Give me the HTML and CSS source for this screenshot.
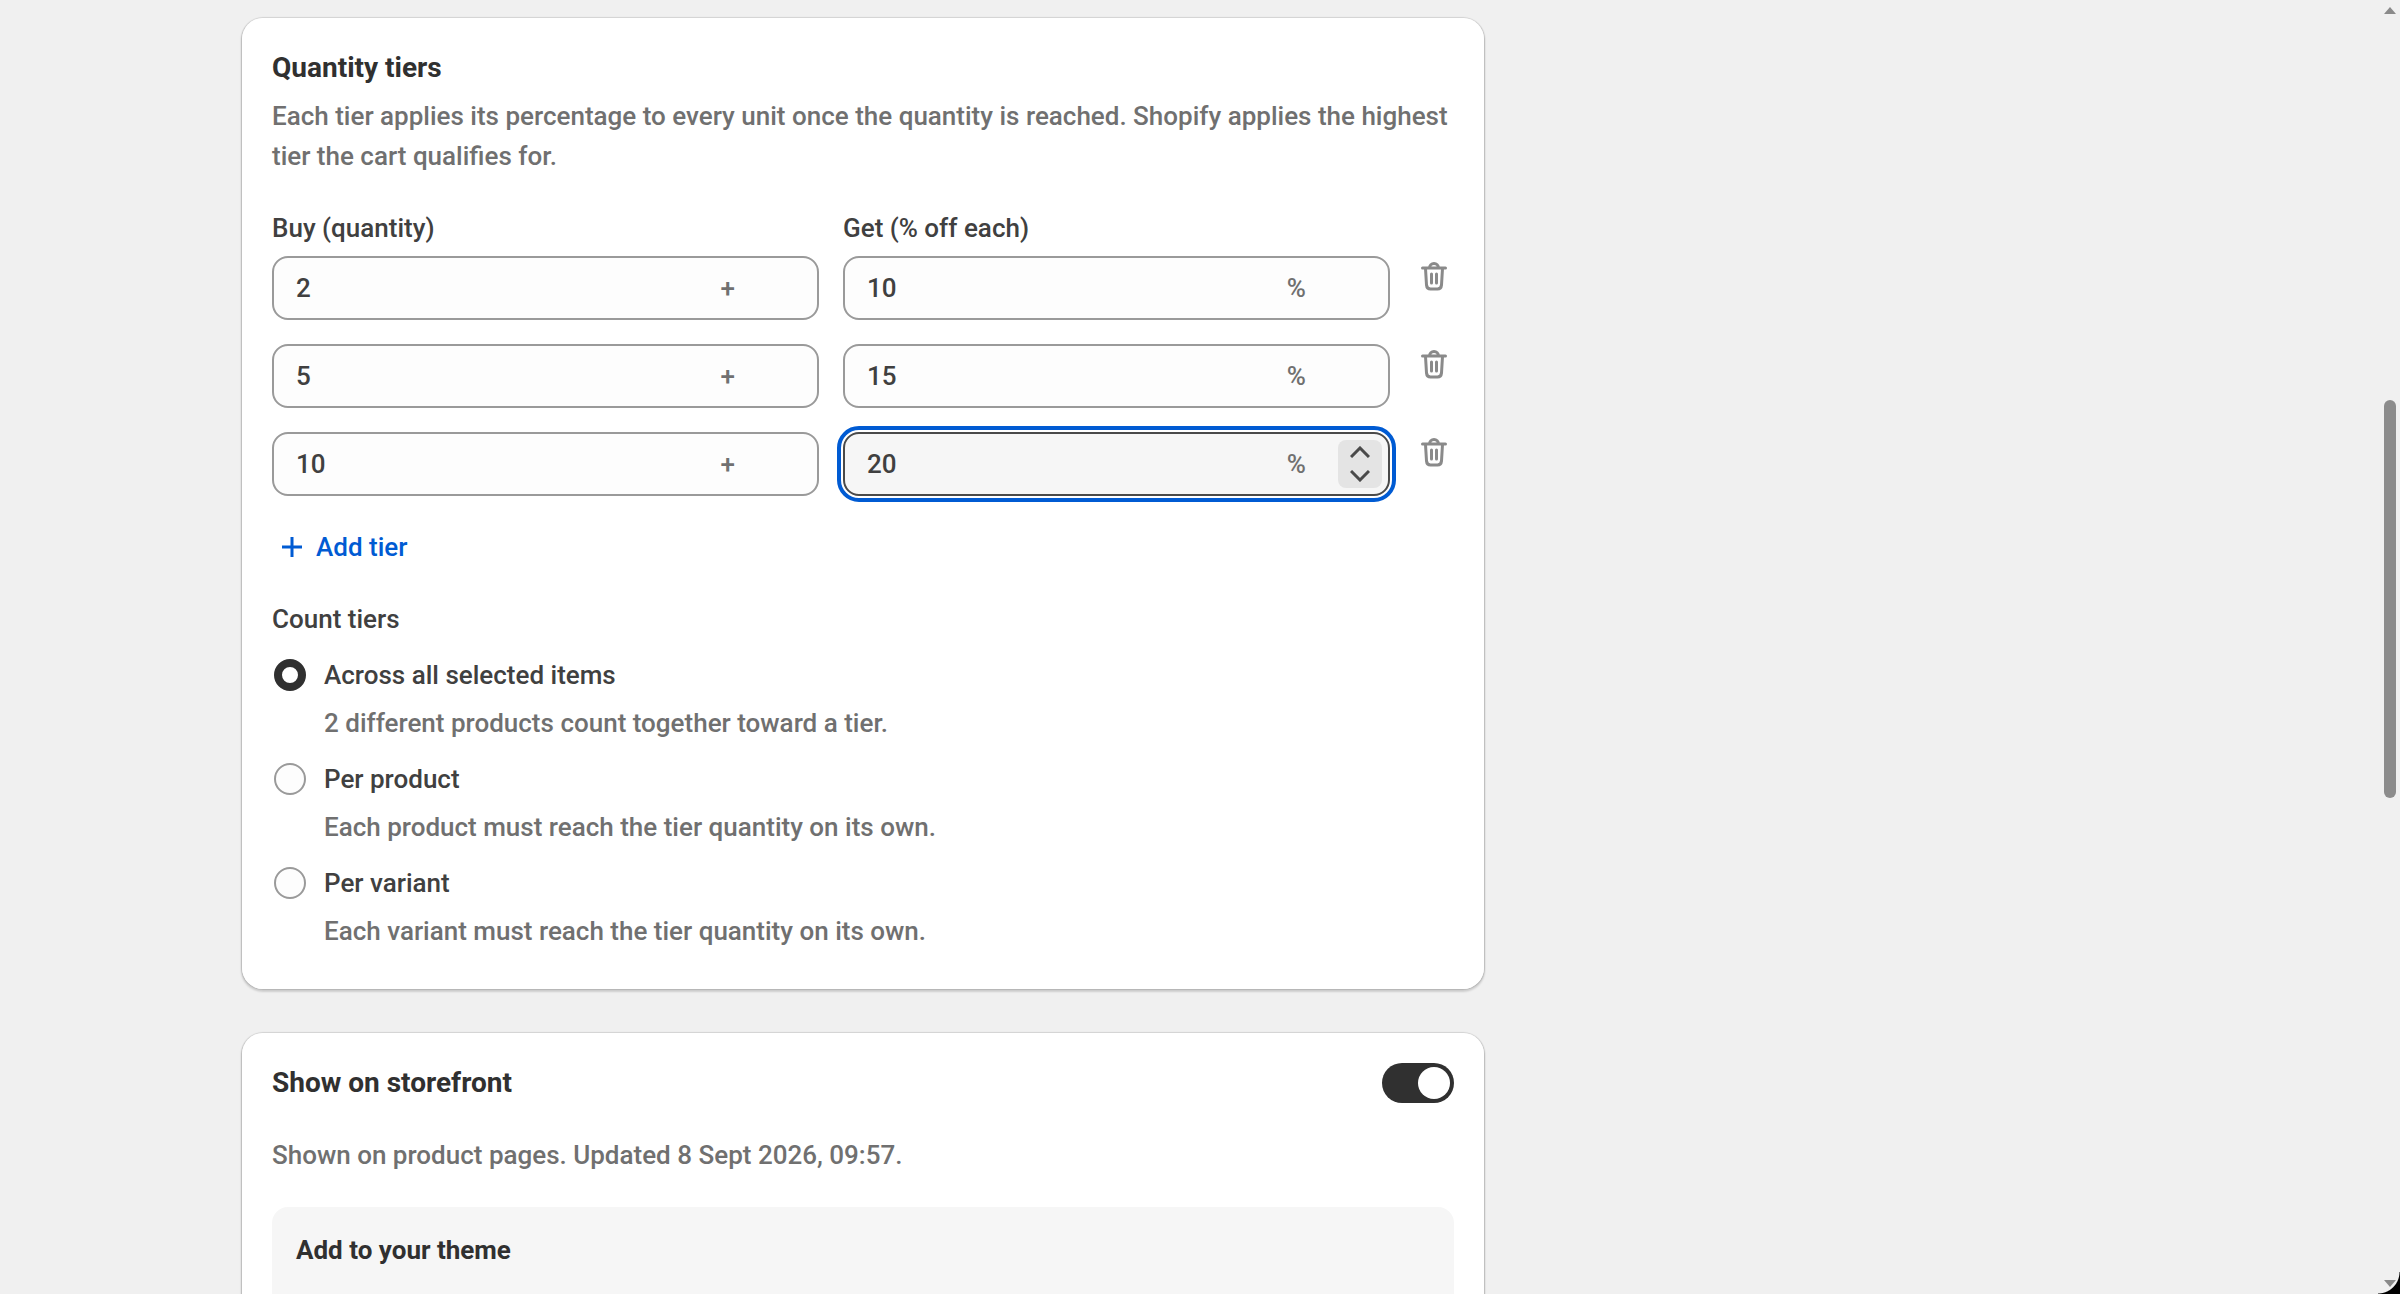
FILE: index.html
```html
<!DOCTYPE html>
<html lang="en">
<head>
<meta charset="utf-8">
<meta name="viewport" content="width=device-width, initial-scale=1">
<title>Quantity tiers</title>
<link rel="stylesheet" href="styles.css">
</head>
<body>
<svg class="sprite" aria-hidden="true">
  <symbol id="trash" viewBox="0 0 26 32">
    <path d="M1.500 8h23M8.500 8a4.500 4.500 0 0 1 9 0M4.500 8.500l1 16.500q.4 4 4 4h7q3.600 0 4-4l1-16.500M10.500 14v9M15.500 14v9" fill="none" stroke="currentColor" stroke-width="3" stroke-linecap="round" stroke-linejoin="round"/>
  </symbol>
</svg>
<div class="page">
  <main class="layout">
    <div class="main-column">
      <section class="card tiers">
        <h2>Quantity tiers</h2>
        <p class="muted">Each tier applies its percentage to every unit once the quantity is reached. Shopify applies the highest tier the cart qualifies for.</p>
        <div class="tier-grid">
          <label for="buy1">Buy (quantity)</label>
          <label for="get1">Get (% off each)</label>
          <span></span>

          <div class="field"><input id="buy1" type="text" inputmode="numeric" value="2"><span class="suffix">+</span></div>
          <div class="field"><input id="get1" type="text" inputmode="numeric" value="10"><span class="suffix">%</span></div>
          <button class="remove" type="button" aria-label="Remove tier"><svg><use href="#trash"/></svg></button>

          <div class="field"><input aria-label="Buy quantity, tier 2" type="text" inputmode="numeric" value="5"><span class="suffix">+</span></div>
          <div class="field"><input aria-label="Percent off, tier 2" type="text" inputmode="numeric" value="15"><span class="suffix">%</span></div>
          <button class="remove" type="button" aria-label="Remove tier"><svg><use href="#trash"/></svg></button>

          <div class="field"><input aria-label="Buy quantity, tier 3" type="text" inputmode="numeric" value="10"><span class="suffix">+</span></div>
          <div class="field focused"><input aria-label="Percent off, tier 3" type="text" inputmode="numeric" value="20"><span class="suffix">%</span>
            <span class="spinner">
              <button type="button" aria-label="Increase"><svg viewBox="0 0 20 12"><path d="M1 11l9-9 9 9"/></svg></button>
              <button type="button" aria-label="Decrease"><svg viewBox="0 0 20 12"><path d="M1 1l9 9 9-9"/></svg></button>
            </span>
          </div>
          <button class="remove" type="button" aria-label="Remove tier"><svg><use href="#trash"/></svg></button>
        </div>
        <button class="add" type="button"><svg viewBox="0 0 20 20"><path d="M10 0v20M0 10h20"/></svg>Add tier</button>
        <fieldset class="choices">
          <legend>Count tiers</legend>
          <div class="choice">
            <input type="radio" name="count" id="across" checked aria-describedby="across-help">
            <label for="across">Across all selected items</label>
            <p class="muted" id="across-help">2 different products count together toward a tier.</p>
          </div>
          <div class="choice">
            <input type="radio" name="count" id="product" aria-describedby="product-help">
            <label for="product">Per product</label>
            <p class="muted" id="product-help">Each product must reach the tier quantity on its own.</p>
          </div>
          <div class="choice">
            <input type="radio" name="count" id="variant" aria-describedby="variant-help">
            <label for="variant">Per variant</label>
            <p class="muted" id="variant-help">Each variant must reach the tier quantity on its own.</p>
          </div>
        </fieldset>
      </section>
      <section class="card storefront">
        <div class="card-header">
          <h2><label for="show">Show on storefront</label></h2>
          <input class="switch" type="checkbox" role="switch" id="show" checked>
        </div>
        <p class="muted">Shown on product pages. Updated 8 Sept 2026, 09:57.</p>
        <div class="theme-box">
          <h3>Add to your theme</h3>
        </div>
      </section>
    </div>
  </main>
</div>
<div class="scrollbar" aria-hidden="true">
  <svg viewBox="0 0 12 8"><path d="M0 7l6-7 6 7z"/></svg>
  <div class="track"><div class="thumb"></div></div>
  <svg viewBox="0 0 12 8"><path d="M0 0h12l-6 7z"/></svg>
</div>
<div class="window-corner" aria-hidden="true"></div>
</body>
</html>
```
FILE: styles.css
```css
* { box-sizing: border-box; }

body {
  margin: 0;
  height: 100vh;
  overflow: hidden;
  background: #f0f0f0;
  color: #404040;
  font: 500 26px/40px Roboto, "Liberation Sans", sans-serif;
}

h2, h3, p { margin: 0; }
h2 { color: #303030; font-size: 28px; font-weight: 700; line-height: 40px; }
h3 { color: #303030; font-size: 26px; font-weight: 700; line-height: 40px; }

button, input { font: inherit; color: inherit; }
button { padding: 0; border: 0; background: none; }

.sprite { display: none; }
.muted { color: #707070; }

.page {
  height: 100vh;
  overflow: hidden;
  padding: 17px 16px 0 0;
}

.layout {
  display: grid;
  grid-template-columns: minmax(0, 1fr) 628px;
  gap: 30px;
  max-width: 1902px;
  margin: 0 auto;
}

.main-column { display: grid; gap: 42px; }

.card {
  padding: 30px;
  border-radius: 22px;
  background: #fff;
  border: 1px solid transparent;
  background-clip: padding-box;
  box-shadow: 0 2px 2px rgba(0, 0, 0, .14), 0 0 1px rgba(0, 0, 0, .12);
}

.tiers { padding-bottom: 38px; }
.tiers > .muted { margin-top: 8px; }

.tier-grid {
  display: grid;
  grid-template-columns: 1fr 1fr 40px;
  column-gap: 24px;
  row-gap: 24px;
  margin-top: 32px;
}
.tier-grid > label { margin-bottom: -16px; }

.field {
  display: flex;
  align-items: center;
  position: relative;
  height: 64px;
  padding: 0 82px 0 22px;
  border: 2px solid #9a9a9a;
  border-radius: 16px;
  background: #fdfdfd;
}
.field input {
  flex: 1;
  min-width: 0;
  padding: 0;
  border: 0;
  outline: 0;
  background: none;
}
.suffix { color: #707070; }

.focused {
  border-color: #4a4a4a;
  background: #f6f6f6;
  outline: 4px solid #005bd3;
  outline-offset: 2px;
}

.spinner {
  display: flex;
  flex-direction: column;
  position: absolute;
  top: 6px;
  right: 6px;
  width: 44px;
  height: 48px;
  border-radius: 8px;
  background: #e4e4e4;
}
.spinner button {
  display: flex;
  flex: 1;
  align-items: center;
  justify-content: center;
}
.spinner svg {
  width: 20px;
  height: 12px;
  fill: none;
  stroke: #4a4a4a;
  stroke-width: 3;
}

.remove {
  display: flex;
  align-items: center;
  justify-content: center;
  height: 40px;
  color: #8a8a8a;
}
.remove svg { width: 26px; height: 32px; }

.add {
  display: flex;
  align-items: center;
  gap: 14px;
  margin: 31px 0 0 10px;
  color: #005bd3;
}
.add svg {
  width: 20px;
  height: 20px;
  fill: none;
  stroke: currentColor;
  stroke-width: 3;
}

.choices {
  display: grid;
  gap: 16px;
  margin: 32px 0 0;
  padding: 0;
  border: 0;
}
.choices legend { margin-bottom: 16px; padding: 0; }

.choice {
  display: grid;
  grid-template-columns: 32px 1fr;
  column-gap: 18px;
  row-gap: 8px;
  align-items: center;
  padding-left: 2px;
}
.choice .muted { grid-column: 2; }
.choice input {
  appearance: none;
  width: 32px;
  height: 32px;
  margin: 0;
  border: 2px solid #9a9a9a;
  border-radius: 50%;
  background: #fdfdfd;
}
.choice input:checked { border: 8px solid #303030; background: #fff; }

.card-header {
  display: flex;
  align-items: center;
  justify-content: space-between;
}

.switch {
  appearance: none;
  display: flex;
  align-items: center;
  width: 72px;
  height: 40px;
  margin: 0;
  padding: 0 4px;
  border-radius: 20px;
  background: #303030;
}
.switch::before {
  content: "";
  width: 32px;
  height: 32px;
  margin-left: auto;
  border-radius: 50%;
  background: #fff;
}

.storefront .muted { margin-top: 32px; }

.theme-box {
  min-height: 120px;
  margin-top: 32px;
  padding: 23px 24px;
  border-radius: 16px;
  background: #f6f6f6;
}

.scrollbar {
  display: flex;
  flex-direction: column;
  position: fixed;
  top: 0;
  right: 0;
  bottom: 0;
  width: 16px;
  padding: 7px 4px 6px 0;
}
.scrollbar svg { width: 12px; height: 8px; fill: #8a8a8a; }
.track { flex: 1; padding-top: 385px; }
.thumb { height: 398px; border-radius: 6px; background: #8c8c8c; }

.window-corner {
  position: fixed;
  right: 0;
  bottom: 0;
  width: 22px;
  height: 22px;
  background: radial-gradient(circle at 0 0, transparent 21px, #000 22px);
}
```
